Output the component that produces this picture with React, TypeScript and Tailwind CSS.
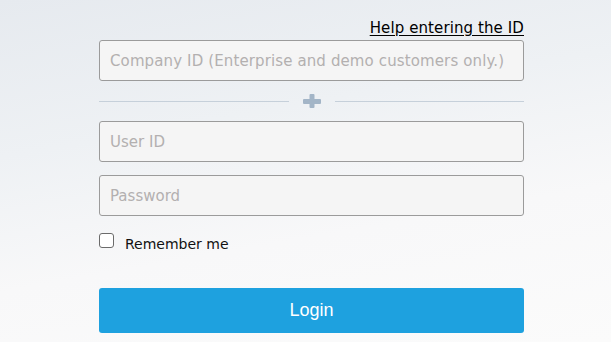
import React from "react";

export default function App() {
  const [remember, setRemember] = React.useState(false);

  return (
    <div className="relative h-[342px] w-[611px] overflow-hidden bg-[linear-gradient(170deg,#e6eaef_0%,#eef1f4_35%,#f8f8f9_65%,#fbfbfb_100%)] font-['DejaVu_Sans',sans-serif]">
      <div className="ml-[99px] w-[425px] pt-[18px]">
        {/* Help link */}
        <div className="flex justify-end">
          <a href="#" className="text-[15px] leading-[21px] tracking-[0.1px] text-black underline underline-offset-2">
            Help entering the ID
          </a>
        </div>

        {/* Company ID */}
        <input
          placeholder="Company ID (Enterprise and demo customers only.)"
          className="mt-[1px] block h-[41px] w-full rounded-[3px] border border-[#9b9b9b] bg-[#f5f5f5] px-[10px] text-[15px] tracking-[0.12px] text-[#333] placeholder:text-[#b3b0b0] outline-none"
        />

        {/* Divider with plus */}
        <div className="flex h-[40px] items-center gap-[14px]">
          <div className="h-px flex-1 bg-[#c6d0da]" />
          <svg width="18" height="14" viewBox="0 0 18 14">
            <rect x="0" y="5" width="18" height="5" rx="1" fill="#a3b5c7" />
            <rect x="6.5" y="0" width="5" height="14" rx="1" fill="#a3b5c7" />
          </svg>
          <div className="h-px flex-1 bg-[#c6d0da]" />
        </div>

        {/* User ID */}
        <input
          placeholder="User ID"
          className="block h-[41px] w-full rounded-[3px] border border-[#9b9b9b] bg-[#f5f5f5] px-[10px] text-[15px] text-[#333] placeholder:text-[#b3b0b0] outline-none"
        />

        {/* Password */}
        <input
          type="password"
          placeholder="Password"
          className="mt-[13px] block h-[41px] w-full rounded-[3px] border border-[#9b9b9b] bg-[#f5f5f5] px-[10px] text-[15px] text-[#333] placeholder:text-[#b3b0b0] outline-none"
        />

        {/* Remember me */}
        <label className="mt-[15px] flex items-start gap-[11px]">
          <input
            type="checkbox"
            checked={remember}
            onChange={() => setRemember(!remember)}
            className="mt-[2px] h-[15px] w-[15px] appearance-none rounded-[3px] border border-[#6b6b6b] bg-white"
          />
          <span className="pt-[3px] text-[14px] leading-[20px] text-[#111]">Remember me</span>
        </label>

        {/* Login */}
        <button className="mt-[34px] flex h-[45px] w-full items-center justify-center rounded-[3px] bg-[#1ea1df] font-['Liberation_Sans',sans-serif] text-[18px] text-white">
          Login
        </button>
      </div>
    </div>
  );
}
